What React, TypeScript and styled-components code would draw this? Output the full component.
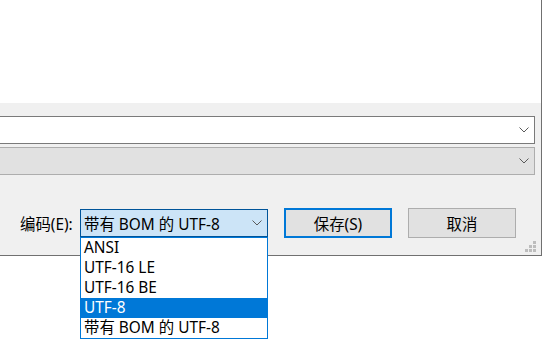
import React from "react";
import styled, { createGlobalStyle } from "styled-components";

const Global = createGlobalStyle`
  html, body { margin: 0; padding: 0; background: #ffffff; }
  body { font-family: "Noto Sans", "Noto Sans CJK SC", sans-serif; }
  * { box-sizing: border-box; }
`;

const Page = styled.div`
  width: 546px;
  height: 345px;
  background: #ffffff;
`;

const Window = styled.div`
  width: 542px;
  border-right: 1px solid #707070;
  border-bottom: 1px solid #707070;
  background: #ffffff;
`;

const TopArea = styled.div`
  height: 103px;
  background: #ffffff;
`;

const Panel = styled.div`
  position: relative;
  height: 152px;
  background: #f0f0f0;
  padding: 13px 6px 0 0;
  display: flex;
  flex-direction: column;
`;

const Field = styled.div<{ $disabled?: boolean }>`
  height: 28px;
  width: 535px;
  display: flex;
  align-items: center;
  justify-content: flex-end;
  padding-right: 5px;
  background: ${(p) => (p.$disabled ? "#e1e1e1" : "#ffffff")};
  border: 1px solid ${(p) => (p.$disabled ? "#adadad" : "#7a7a7a")};
  border-left: none;
  & + & {
    margin-top: 3px;
  }
`;

const BottomRow = styled.div`
  display: flex;
  align-items: center;
  height: 30px;
  margin-top: 33px;
  padding-left: 20px;
`;

const Label = styled.span`
  width: 60px;
  font-size: 15.4px;
  color: #000;
  white-space: nowrap;
`;

const ComboWrap = styled.div`
  position: relative;
  width: 188px;
  z-index: 5;
`;

const Combo = styled.div`
  height: 28px;
  display: flex;
  align-items: center;
  justify-content: space-between;
  padding: 0 5px 0 3px;
  background: #cce4f7;
  border: 1px solid #005499;
  font-size: 15.4px;
  color: #000;
  white-space: nowrap;
`;

const List = styled.ul`
  position: absolute;
  top: 28px;
  left: 0;
  width: 188px;
  margin: 0;
  padding: 0;
  list-style: none;
  background: #ffffff;
  border: 1px solid #0078d7;
`;

const Item = styled.li<{ $selected?: boolean }>`
  height: 20px;
  line-height: 20px;
  padding-left: 3px;
  font-size: 15.4px;
  white-space: nowrap;
  color: ${(p) => (p.$selected ? "#ffffff" : "#000000")};
  background: ${(p) => (p.$selected ? "#0078d7" : "transparent")};
`;

const Button = styled.div<{ $default?: boolean }>`
  width: 108px;
  height: 30px;
  display: flex;
  align-items: center;
  justify-content: center;
  font-size: 15.4px;
  color: #000;
  background: #e1e1e1;
  border: ${(p) => (p.$default ? "2px solid #0078d7" : "1px solid #adadad")};
  margin-left: 16px;
`;

const Grip = styled.svg`
  position: absolute;
  right: 5px;
  bottom: 3px;
`;

const Chevron = () => (
  <svg width="10" height="6" viewBox="0 0 10 6">
    <polyline points="0.5,0.5 5,5 9.5,0.5" fill="none" stroke="#5a5a5a" strokeWidth="1" />
  </svg>
);

const items = ["ANSI", "UTF-16 LE", "UTF-16 BE", "UTF-8", "带有 BOM 的 UTF-8"];

export default function App() {
  return (
    <>
      <Global />
      <Page>
        <Window>
          <TopArea />
          <Panel>
            <Field>
              <Chevron />
            </Field>
            <Field $disabled>
              <Chevron />
            </Field>
            <BottomRow>
              <Label>编码(E):</Label>
              <ComboWrap>
                <Combo>
                  <span>带有 BOM 的 UTF-8</span>
                  <Chevron />
                </Combo>
                <List>
                  {items.map((it) => (
                    <Item key={it} $selected={it === "UTF-8"}>
                      {it}
                    </Item>
                  ))}
                </List>
              </ComboWrap>
              <Button $default>保存(S)</Button>
              <Button>取消</Button>
            </BottomRow>
            <Grip width="11" height="11" viewBox="0 0 11 11">
              <rect x="8" y="0" width="3" height="3" fill="#bdbdbd" />
              <rect x="4" y="4" width="3" height="3" fill="#bdbdbd" />
              <rect x="8" y="4" width="3" height="3" fill="#bdbdbd" />
              <rect x="0" y="8" width="3" height="3" fill="#bdbdbd" />
              <rect x="4" y="8" width="3" height="3" fill="#bdbdbd" />
              <rect x="8" y="8" width="3" height="3" fill="#bdbdbd" />
            </Grip>
          </Panel>
        </Window>
      </Page>
    </>
  );
}
